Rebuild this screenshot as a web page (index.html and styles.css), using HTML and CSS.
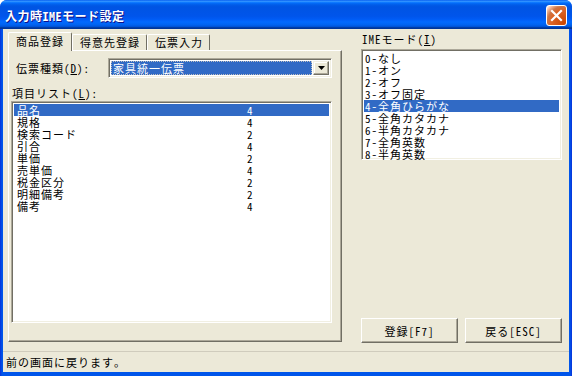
FILE: index.html
```html
<!DOCTYPE html>
<html lang="ja">
<head>
<meta charset="utf-8">
<title>入力時IMEモード設定</title>
<link rel="stylesheet" href="styles.css">
</head>
<body>
<div class="window">
  <div class="titlebar">
    <span class="title">入力時IMEモード設定</span>
    <div class="close">
      <svg width="13" height="13" viewBox="0 0 13 13"><path d="M2 2 L11 11 M11 2 L2 11" stroke="#fff" stroke-width="2.2" stroke-linecap="square"/></svg>
    </div>
  </div>
  <div class="client">
    <div class="main">
      <div class="left">
        <div class="tabs">
          <div class="tab active">商品登録</div>
          <div class="tab">得意先登録</div>
          <div class="tab">伝票入力</div>
        </div>
        <div class="panel">
          <div class="combo-row">
            <span class="combo-label">伝票種類(<u>D</u>):</span>
            <div class="combo">
              <div class="combo-value"><span class="combo-sel">家具統一伝票</span></div>
              <div class="combo-btn">
                <svg width="7" height="4" viewBox="0 0 7 4"><path d="M0 0 H7 L3.5 4 Z" fill="#000"/></svg>
              </div>
            </div>
          </div>
          <div class="list-label">項目リスト(<u>L</u>):</div>
          <div class="listbox items">
            <div class="row sel"><span>品名</span><span>4</span></div>
            <div class="row"><span>規格</span><span>4</span></div>
            <div class="row"><span>検索コード</span><span>2</span></div>
            <div class="row"><span>引合</span><span>4</span></div>
            <div class="row"><span>単価</span><span>2</span></div>
            <div class="row"><span>売単価</span><span>4</span></div>
            <div class="row"><span>税金区分</span><span>2</span></div>
            <div class="row"><span>明細備考</span><span>2</span></div>
            <div class="row"><span>備考</span><span>4</span></div>
          </div>
        </div>
      </div>
      <div class="right">
        <div class="ime-label">IMEモード(<u>I</u>)</div>
        <div class="listbox ime">
          <div class="irow">0-なし</div>
          <div class="irow">1-オン</div>
          <div class="irow">2-オフ</div>
          <div class="irow">3-オフ固定</div>
          <div class="irow sel">4-全角ひらがな</div>
          <div class="irow">5-全角カタカナ</div>
          <div class="irow">6-半角カタカナ</div>
          <div class="irow">7-全角英数</div>
          <div class="irow">8-半角英数</div>
        </div>
        <div class="buttons">
          <div class="btn">登録[F7]</div>
          <div class="btn">戻る[ESC]</div>
        </div>
      </div>
    </div>
    <div class="status">前の画面に戻ります。</div>
  </div>
</div>
</body>
</html>
```

FILE: styles.css
```css
html, body {
  margin: 0;
  padding: 0;
}
body {
  width: 572px;
  height: 376px;
  overflow: hidden;
  background: #fff;
  font-family: "Noto Sans Mono CJK JP", "Noto Sans CJK JP", "DejaVu Sans Mono", monospace;
  font-size: 11px;
  letter-spacing: 1px;
  color: #000;
}
.window {
  width: 572px;
  height: 376px;
  display: flex;
  flex-direction: column;
  background: linear-gradient(to right, #0831d9 0, #0055ea 2px, #0055ea 570px, #0831d9 572px);
  border-radius: 7px 7px 0 0;
  overflow: hidden;
}
.titlebar {
  flex: none;
  height: 29px;
  display: flex;
  align-items: center;
  justify-content: space-between;
  padding: 1px 5px 0 5px;
  box-sizing: border-box;
  background: linear-gradient(to bottom, #0058ee 0%, #3593ff 4%, #288eff 6%, #127dff 8%, #036ffc 10%, #0262ee 14%, #0057e5 20%, #0054e3 24%, #0055eb 56%, #005bf5 66%, #026afe 76%, #0062ef 86%, #0052d6 92%, #0040ab 94%, #003092 100%);
}
.title {
  color: #fff;
  font-weight: bold;
  font-size: 12px;
  letter-spacing: 0.5px;
  text-shadow: 1px 1px #0f1089;
}
.close {
  width: 21px;
  height: 21px;
  box-sizing: border-box;
  border: 1px solid #fff;
  border-radius: 3px;
  display: flex;
  align-items: center;
  justify-content: center;
  background: radial-gradient(circle at 90% 90%, #cc4600 0%, #dc6527 55%, #cd7546 70%, #ffccb2 90%, #fff 100%);
}
.client {
  flex: 1;
  margin: 0 3px 4px 3px;
  background: #ece9d8;
  display: flex;
  flex-direction: column;
}
.main {
  flex: 1;
  display: flex;
  gap: 19px;
  padding: 3px 7px 0 5px;
}
.left {
  width: 334px;
  flex: none;
  display: flex;
  flex-direction: column;
}
.tabs {
  height: 18px;
  display: flex;
  align-items: flex-end;
  position: relative;
  z-index: 1;
}
.tab {
  height: 16px;
  box-sizing: border-box;
  padding: 0 6px 0 7px;
  border: 1px solid;
  border-color: #fff #716f64 transparent #fff;
  border-bottom: none;
  border-radius: 2px 2px 0 0;
  line-height: 15px;
  white-space: nowrap;
  background: #ece9d8;
}
.tab.active {
  height: 19px;
  margin-bottom: -1px;
  line-height: 17px;
  padding: 0 7px 0 7px;
}
.panel {
  height: 292px;
  flex: none;
  box-sizing: border-box;
  border: 1px solid;
  border-color: #fff #716f64 #716f64 #fff;
  box-shadow: inset -1px -1px #aca899;
  padding: 7px 0 0 1px;
}
.combo-row {
  display: flex;
  align-items: center;
  height: 20px;
  padding-left: 6px;
}
.combo-label {
  width: 92px;
  flex: none;
  white-space: nowrap;
}
.combo {
  width: 224px;
  height: 20px;
  box-sizing: border-box;
  border: 1px solid;
  border-color: #aca899 #fff #fff #aca899;
  box-shadow: inset 1px 1px #716f64, inset -1px -1px #f1efe2;
  background: #fff;
  display: flex;
  padding: 2px;
}
.combo-value {
  flex: 1;
  display: flex;
  padding-right: 1px;
}
.combo-sel {
  flex: 1;
  background: #316ac5;
  color: #fff;
  outline: 1px dotted #c0c0c0;
  outline-offset: -1px;
  padding-left: 2px;
  line-height: 14px;
}
.combo-btn {
  width: 16px;
  flex: none;
  box-sizing: border-box;
  border: 1px solid;
  border-color: #f1efe2 #716f64 #716f64 #f1efe2;
  box-shadow: inset -1px -1px #aca899, inset 1px 1px #fff;
  background: #ece9d8;
  display: flex;
  align-items: center;
  justify-content: center;
}
.list-label {
  margin: 9px 0 2px 2px;
  height: 12px;
  line-height: 12px;
}
.listbox {
  box-sizing: border-box;
  border: 1px solid;
  border-color: #aca899 #fff #fff #aca899;
  box-shadow: inset 1px 1px #716f64, inset -1px -1px #f1efe2;
  background: #fff;
  padding: 2px;
}
.items {
  width: 321px;
  height: 222px;
  margin-left: 1px;
}
.row {
  display: grid;
  grid-template-columns: 230px 1fr;
  height: 12px;
  line-height: 12px;
  padding-left: 3px;
}
.sel {
  background: #316ac5;
  color: #fff;
}
.right {
  width: 201px;
  flex: none;
  display: flex;
  flex-direction: column;
  padding-bottom: 8px;
}
.ime-label {
  margin-top: 1px;
  height: 12px;
  line-height: 12px;
  padding-left: 1px;
}
.ime {
  margin-top: 4px;
  height: 111px;
}
.irow {
  height: 12px;
  line-height: 12px;
  padding-left: 1px;
}
.buttons {
  margin-top: auto;
  display: flex;
  gap: 7px;
}
.btn {
  width: 97px;
  height: 25px;
  box-sizing: border-box;
  border: 1px solid;
  border-color: #fff #716f64 #716f64 #fff;
  box-shadow: inset -1px -1px #aca899;
  background: #ece9d8;
  display: flex;
  align-items: center;
  justify-content: center;
}
.status {
  flex: none;
  height: 21px;
  box-sizing: border-box;
  border-top: 1px solid #d0ccbd;
  padding-left: 3px;
  line-height: 20px;
}
```
